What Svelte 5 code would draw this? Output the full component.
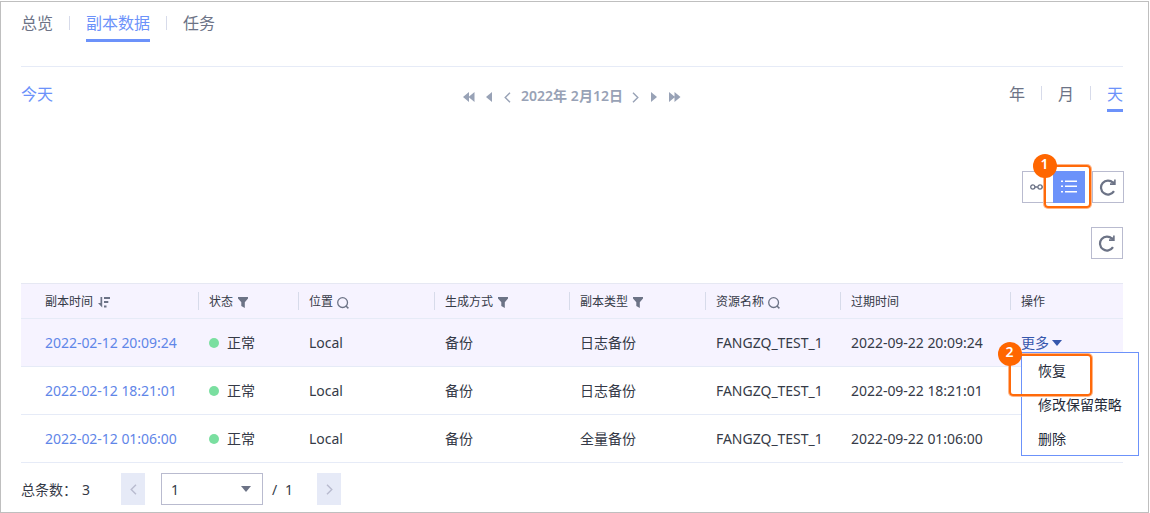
<script>
  const tabs = ['总览', '副本数据', '任务'];
  const scales = ['年', '月', '天'];
  const columns = [
    { label: '副本时间', icon: 'sort' },
    { label: '状态', icon: 'filter' },
    { label: '位置', icon: 'search' },
    { label: '生成方式', icon: 'filter' },
    { label: '副本类型', icon: 'filter' },
    { label: '资源名称', icon: 'search' },
    { label: '过期时间' },
    { label: '操作' }
  ];
  const rows = [
    { time: '2022-02-12 20:09:24', type: '日志备份', expire: '2022-09-22 20:09:24' },
    { time: '2022-02-12 18:21:01', type: '日志备份', expire: '2022-09-22 18:21:01' },
    { time: '2022-02-12 01:06:00', type: '全量备份', expire: '2022-09-22 01:06:00' }
  ];
  const actions = ['恢复', '修改保留策略', '删除'];
  let tab = $state(1);
  let scale = $state(2);
</script>

{#snippet refresh()}
  <svg width="18" height="18" viewBox="0 0 18 18"><path d="M14 4.600A7 7 0 1 0 15 13.200" fill="none" stroke="#6c7386" stroke-width="2.200" /><path d="M16.700 1.500V7h-5.700V5.200h2.500V3.400h1.600V1.500z" fill="#6c7386" /></svg>
{/snippet}

<div class="frame">
  <nav class="tabs">
    {#each tabs as name, i}
      {#if i}<i class="bar"></i>{/if}
      <button class="tab" class:on={tab === i} onclick={() => (tab = i)}>{name}</button>
    {/each}
  </nav>

  <div class="dates">
    <span class="today">今天</span>
    <div class="pager">
      <svg width="12" height="10" viewBox="0 0 12 10"><path d="M6 0v10L0 5zM11.500 0v10L5.500 5z" /></svg>
      <svg class="p2" width="6" height="10" viewBox="0 0 6 10"><path d="M6 0v10L0 5z" /></svg>
      <svg class="p3" width="7" height="11" viewBox="0 0 7 11"><path class="ln" d="M6 .7L1.200 5.500L6 10.300" /></svg>
      <b>2022年 2月12日</b>
      <svg width="7" height="11" viewBox="0 0 7 11"><path class="ln" d="M1 .7L5.800 5.500L1 10.300" /></svg>
      <svg class="n2" width="6" height="10" viewBox="0 0 6 10"><path d="M0 0v10L6 5z" /></svg>
      <svg class="n3" width="12" height="10" viewBox="0 0 12 10"><path d="M0 0v10L6 5zM5.500 0v10L11.500 5z" /></svg>
    </div>
    <div class="scales">
      {#each scales as name, i}
        {#if i}<i class="bar"></i>{/if}
        <button class="tab" class:on={scale === i} onclick={() => (scale = i)}>{name}</button>
      {/each}
    </div>
  </div>

  <div class="tools">
    <div class="view">
      <button class="box axis" aria-label="timeline">
        <svg width="16" height="6" viewBox="0 0 16 6" fill="none" stroke="#6c7386" stroke-width="1.300"><circle cx="2.800" cy="3" r="2.100" /><circle cx="10" cy="3" r="2.100" /><path d="M5 3h2.800M12.200 3H16" /></svg>
      </button>
      <button class="box list" aria-label="list">
        <svg width="16" height="13" viewBox="0 0 16 13" fill="#fff"><path d="M0 .5h2v1.500H0zM4 .5h12v1.500H4zM0 5.500h2V7H0zM4 5.500h12V7H4zM0 11h2v1.500H0zM4 11h12v1.500H4z" /></svg>
      </button>
    </div>
    <button class="box" aria-label="refresh">{@render refresh()}</button>
    <div class="callout first"><span>1</span></div>
  </div>
  <div class="tools second">
    <button class="box" aria-label="refresh">{@render refresh()}</button>
  </div>

  <div class="table">
    <div class="row head">
      {#each columns as c}
        <div class="th">
          <span>{c.label}</span>
          {#if c.icon === 'sort'}
            <svg class="sort" width="12" height="11" viewBox="0 0 12 11" fill="#6c7386"><path d="M2.500 0h1.700v10.500L0 6h2.500zM6 0h6v2H6zM6 4h4.300v2H6zM6 8.500h2.500v2H6z" /></svg>
          {:else if c.icon === 'filter'}
            <svg class="filter" width="10" height="11" viewBox="0 0 10 11" fill="#6c7386"><path d="M0 0h10v1.500L6.800 5.300V11L3.300 9V5.300L0 1.500z" /></svg>
          {:else if c.icon === 'search'}
            <svg class="search" width="12" height="12" viewBox="0 0 12 12" fill="none" stroke="#6c7386"><circle cx="5.600" cy="5.600" r="4.900" stroke-width="1.300" /><path d="M9 9l2.400 2.400" stroke-width="1.500" /></svg>
          {/if}
        </div>
      {/each}
    </div>
    {#each rows as r, i}
      <div class="row" class:active={i === 0}>
        <div class="link">{r.time}</div>
        <div class="state"><i></i>正常</div>
        <div>Local</div>
        <div>备份</div>
        <div>{r.type}</div>
        <div>FANGZQ_TEST_1</div>
        <div>{r.expire}</div>
        <div class="more">
          {#if i === 0}
            更多<svg width="10" height="6" viewBox="0 0 10 6" fill="#3657ad"><path d="M0 0h10L5 6z" /></svg>
            <div class="menu">
              {#each actions as a}<div>{a}</div>{/each}
            </div>
            <div class="callout restore"><span>2</span></div>
          {/if}
        </div>
      </div>
    {/each}
  </div>

  <div class="foot">
    <span class="total">总条数：</span><span class="count">3</span>
    <button class="step" aria-label="previous"><svg width="7" height="11" viewBox="0 0 7 11"><path d="M6 .7L1.200 5.500L6 10.300" /></svg></button>
    <div class="select">1<svg width="10" height="6" viewBox="0 0 10 6" fill="#6c7386"><path d="M0 0h10L5 6z" /></svg></div>
    <span class="slash">/</span><span class="pages">1</span>
    <button class="step" aria-label="next"><svg width="7" height="11" viewBox="0 0 7 11"><path d="M1 .7L5.800 5.500L1 10.300" /></svg></button>
  </div>
</div>

<style>
  :global(body) { background: #fff; overflow: hidden; }
  .frame {
    box-sizing: border-box; width: 1149px; height: 512px; margin-top: 1px;
    padding: 0 25px 0 20px; border: 1px solid #bfbfbf;
    font: 14px "Noto Sans", "Noto Sans CJK SC", sans-serif; color: #353a47;
    display: flow-root;
  }
  svg { display: block; flex: none; }
  button { font: inherit; color: inherit; background: none; border: 0; padding: 0; margin: 0; }
  .tabs, .scales { display: flex; font-size: 16px; color: #6c7386; }
  .tabs { height: 64px; padding-top: 9px; box-sizing: border-box; }
  .tab { height: 31px; box-sizing: border-box; line-height: 24px; padding-bottom: 4px; border-bottom: 3px solid transparent; white-space: nowrap; }
  .tab.on { color: #6c92fa; border-color: #6c92fa; }
  .bar { width: 1px; height: 14px; background: #d7dbea; margin: 5px 16px 0; }
  .dates { display: grid; grid-template-columns: 1fr auto 1fr; height: 105px; box-sizing: border-box; padding-top: 15px; border-top: 1px solid #e6ebf7; align-items: start; }
  .today { font-size: 16px; line-height: 24px; color: #6c92fa; }
  .scales { justify-content: flex-end; margin-top: -1px; }
  .scales .tab { padding: 1px 0 3px; }
  .pager { display: flex; align-items: center; height: 30px; color: #98a2b6; fill: #98a2b6; }
  .pager b { margin: 0 9px 0 10px; font-weight: 600; font-size: 14px; line-height: 20px; position: relative; top: -1px; letter-spacing: .05px; }
  .pager .p2 { margin: 0 12px 0 11px; }
  .pager .n2 { margin: 0 12px 0 12px; }
  .ln { fill: none; stroke: #98a2b6; stroke-width: 1.4; }
  .tools { display: flex; justify-content: flex-end; gap: 7px; height: 32px; margin-right: -1px; position: relative; }
  .tools.second { margin: 24px 0; }
  .view { display: flex; }
  .box { width: 32px; height: 32px; box-sizing: border-box; border: 1px solid #b9bbcf; display: flex; align-items: center; justify-content: center; }
  .axis { width: 31px; border-right: 0; justify-content: flex-start; padding-left: 7px; }
  .list { background: #6c92fa; border-color: #6c92fa; padding-bottom: 2px; }
  .callout { position: absolute; box-sizing: border-box; border: 2px solid #ff6a0a; border-radius: 4px; box-shadow: 0 0 0 1px #ffb587; pointer-events: none; }
  .callout span { position: absolute; left: -13px; top: -13px; width: 24px; height: 24px; box-sizing: border-box; padding-right: 1px; border-radius: 50%; background: #ff6600; color: #fff; font-size: 14px; font-weight: 600; line-height: 20px; text-align: center; }
  .first { right: 33px; top: -6px; width: 47px; height: 43px; }
  .table { width: 1102px; }
  .row { display: grid; grid-template-columns: 177px 100px 136px 135px 136px 135px 170px 113px; height: 48px; box-sizing: border-box; border-bottom: 1px solid #e6ebf7; align-items: center; }
  .row > div { padding-left: 11px; white-space: nowrap; line-height: 20px; letter-spacing: -.03px; }
  .row > div:first-child { padding-left: 24px; }
  .active, .head { background: #f6f3ff; }
  .head { height: 36px; border-top: 1px solid #e6e8f3; font-size: 12px; }
  .row > .th { display: flex; align-items: center; height: 18px; line-height: 18px; padding-left: 10px; border-left: 1px solid #d7dbea; }
  .th span { padding-top: 2px; }
  .row > .th:first-child { padding-left: 23px; border-color: transparent; }
  .sort, .filter { margin: 3px 0 0 5px; }
  .search { margin: 3px 0 0 4px; }
  .row > .link { color: #5f86e8; }
  .state { display: flex; align-items: center; }
  .state i { width: 10px; height: 10px; border-radius: 50%; background: #7adfa0; margin-right: 8px; }
  .more { position: relative; display: flex; align-items: center; color: #3657ad; }
  .more > svg { margin: 1px 0 0 3px; }
  .menu { position: absolute; z-index: 1; left: 11px; top: 19px; width: 118px; height: 104px; box-sizing: border-box; border: 1px solid #6c92fa; background: #fff; color: #252b3a; padding: 1px 0 0 16px; }
  .menu div { line-height: 34px; }
  .restore { left: -1px; top: 21px; width: 83px; height: 42px; z-index: 2; }
  .restore span { top: -14px; }
  .foot { display: flex; align-items: center; height: 32px; margin-top: 10px; }
  .total { width: 61px; white-space: nowrap; }
  .count { width: 39px; }
  .step { width: 24px; height: 32px; background: #e6eaf7; display: flex; align-items: center; justify-content: center; }
  .step path { fill: none; stroke: #b9bbcf; stroke-width: 1.4; }
  .select { width: 102px; height: 32px; box-sizing: border-box; margin: 0 9px 0 16px; padding: 0 11px 0 9px; border: 1px solid #b9bbcf; display: flex; align-items: center; justify-content: space-between; }
  .slash { width: 13px; }
  .pages { width: 32px; }
</style>
